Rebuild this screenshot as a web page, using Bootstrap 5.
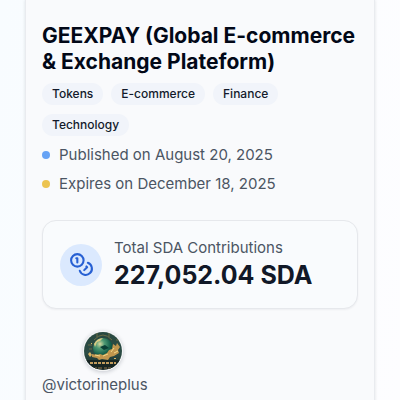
<!DOCTYPE html>
<html lang="en">
<head>
<meta charset="utf-8">
<meta name="viewport" content="width=device-width, initial-scale=1">
<title>GEEXPAY</title>
<link href="https://cdn.jsdelivr.net/npm/bootstrap@5.3.0/dist/css/bootstrap.min.css" rel="stylesheet">
<style>
  body { font-family: Inter, "Liberation Sans", sans-serif; background: linear-gradient(100deg, #f8fcff, #fdfdff); color: #020817; min-height: 100vh; overflow: hidden; }
  .page-wrap { padding: 0 25px; }
  .project-panel { background: #f9fafc; border: 1px solid #e9ebef; border-width: 0 1px; box-shadow: 0 0 3px rgba(15, 23, 42, .12); padding: 23px 16px 20px; min-height: 100vh; }
  .project-title { font-size: 21px; line-height: 26px; font-weight: 700; margin-bottom: 8px; }
  .tag-list { gap: 9px 8px; margin-bottom: 8px; }
  .tag-pill { font-size: 12px; line-height: 22px; font-weight: 500; padding: 0 10px; background: #f1f4fa; color: #131a2b; }
  .date-list { gap: 8px; font-size: 15px; line-height: 21px; color: #4b5563; }
  .date-dot { width: 8px; height: 8px; margin-right: 9px; }
  .dot-blue { background: #67a3f5; }
  .dot-gold { background: #ecc451; }
  .total-box { background: #f9fbfd; border: 1px solid #e6e8ec; border-radius: 14px; padding: 16px 17px; margin: 26px 0 22px; gap: 12px; box-shadow: 0 1px 2px rgba(15, 23, 42, .05); }
  .coin-disc { width: 42px; height: 42px; background: #dbe9fe; color: #2760d3; }
  .total-label { font-size: 15px; line-height: 21px; color: #4b5563; }
  .total-value { font-size: 25px; line-height: 34px; font-weight: 700; color: #111827; }
  .owner-avatar { width: 40px; height: 40px; border-radius: 50%; box-shadow: 0 1px 4px rgba(15, 23, 42, .22); }
  .owner-name { font-size: 15px; line-height: 20px; color: #4b5563; margin-top: 4px; }
</style>
</head>
<body>
<div class="page-wrap">
  <main class="project-panel">
    <h1 class="project-title">GEEXPAY (Global E-commerce &amp; Exchange Plateform)</h1>
    <div class="tag-list d-flex flex-wrap">
      <span class="tag-pill rounded-pill">Tokens</span>
      <span class="tag-pill rounded-pill">E-commerce</span>
      <span class="tag-pill rounded-pill">Finance</span>
      <span class="tag-pill rounded-pill">Technology</span>
    </div>
    <div class="date-list d-flex flex-column">
      <div class="d-flex align-items-center"><span class="date-dot dot-blue rounded-circle"></span>Published on August 20, 2025</div>
      <div class="d-flex align-items-center"><span class="date-dot dot-gold rounded-circle"></span>Expires on December 18, 2025</div>
    </div>
    <section class="total-box d-flex align-items-center">
      <div class="coin-disc rounded-circle d-flex align-items-center justify-content-center flex-shrink-0">
        <svg width="25" height="25" viewBox="0 0 24 24" fill="none" stroke="currentColor" stroke-width="2" stroke-linecap="round" stroke-linejoin="round" aria-hidden="true"><circle cx="8" cy="8" r="6"/><path d="M18.09 10.37A6 6 0 1 1 10.34 18M7 6h1v4M16.71 13.88l.7.71-2.82 2.82"/></svg>
      </div>
      <div>
        <div class="total-label">Total SDA Contributions</div>
        <div class="total-value">227,052.04 SDA</div>
      </div>
    </section>
    <div class="d-inline-flex flex-column align-items-center">
      <svg class="owner-avatar ms-3" viewBox="0 0 40 40" role="img" aria-label="Geexpay">
        <defs>
          <clipPath id="disc"><circle cx="20" cy="20" r="19"/></clipPath>
          <radialGradient id="globe" cx=".35" cy=".3" r=".75"><stop offset="0" stop-color="#d9d9a0"/><stop offset=".3" stop-color="#4f9a74"/><stop offset=".7" stop-color="#14604c"/><stop offset="1" stop-color="#0b3a34"/></radialGradient>
          <linearGradient id="night" x2="0" y2="1"><stop offset="0" stop-color="#28483f"/><stop offset=".55" stop-color="#2c4c45"/><stop offset="1" stop-color="#142522"/></linearGradient>
        </defs>
        <circle cx="20" cy="20" r="20" fill="#f3f4f4"/>
        <g clip-path="url(#disc)">
          <path fill="url(#night)" d="M0 0h40v40H0z"/>
          <path d="M11 9Q20-1 29 9M14 6V2M26 6V2M5 14h4M6 18h3M33 9h3" fill="none" stroke="#7b7547" stroke-width=".8"/>
          <circle cx="20" cy="17" r="10" fill="url(#globe)"/>
          <path d="M11 13q3-6 9-6l-3 3-3 1-2 5z" fill="#dccb83"/>
          <path d="M17 16l5-2 4 3-5 2z" fill="#0b4036"/>
          <path d="M9 23q5 1 8 0l3 1 4-2 2-3 3-1 1-5 3 2 1-3 3 4-2 3 1 3-5 3-4 1-2 3-6-1-3 1-2-2-5-1z" fill="#c0964e"/>
          <path d="M12 24l5 1M20 25l5-2M28 21l3-4M31 22l4-2" fill="none" stroke="#f3d887" stroke-width="1"/>
          <path d="M5 23l2-2 2 3-2 2zM31 27h2v1h-2zM8 12h1v1H8z" fill="#d8b365"/>
          <path d="M2 29h36v9H2z" fill="#172522"/>
          <path d="M7 32h3m1 0h3m1 0h3m1 0h3m1 0h3m1 0h3m1 0h2" stroke="#c29c5d" stroke-width="2"/>
          <path d="M12 37h2m1 0h4m2 0h3m1 0h3" stroke="#8d744a"/>
        </g>
      </svg>
      <div class="owner-name">@victorineplus</div>
    </div>
  </main>
</div>
<script src="https://cdn.jsdelivr.net/npm/bootstrap@5.3.0/dist/js/bootstrap.bundle.min.js"></script>
</body>
</html>
